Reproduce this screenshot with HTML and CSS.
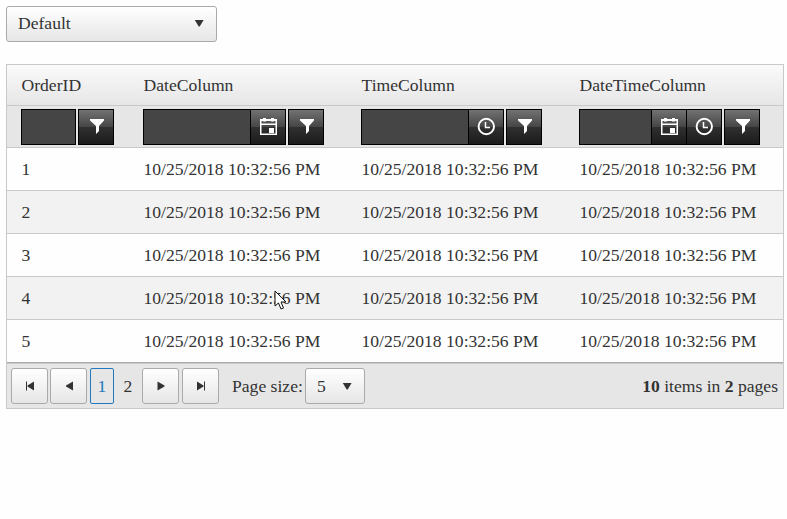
FILE: index.html
```html
<!DOCTYPE html>
<html lang="en">
<head>
<meta charset="utf-8">
<title>Orders</title>
<link rel="stylesheet" href="styles.css">
</head>
<body>
<svg class="defs" width="0" height="0">
  <symbol id="filter" viewBox="0 0 20 20"><path d="M3 3h14v1.500l-5 5.500v5l-3 3v-8l-6-5.500z" fill="#fff"/></symbol>
  <symbol id="calendar" viewBox="0 0 20 20"><path d="M2 3h17v16H2zM3.500 9v8.500h14V9zM3.500 5v2.500h14V5z" fill="#fff" fill-rule="evenodd"/><path d="M5 2h3v3.500H5zM13 2h3v3.500h-3zM11 12h5v5h-5z" fill="#fff"/></symbol>
  <symbol id="clock" viewBox="0 0 20 20"><circle cx="10.300" cy="10.500" r="7.700" fill="none" stroke="#fff" stroke-width="1.900"/><path d="M9.500 6v5.500H14" fill="none" stroke="#fff" stroke-width="1.500"/></symbol>
  <symbol id="down" viewBox="0 0 10 8"><path d="M.8 1h8.800L5.700 7.500h-1z" fill="#333"/></symbol>
</svg>
<div class="select skin"><span>Default</span><svg class="arrow"><use href="#down"/></svg></div>
<div class="grid">
  <div class="row header"><span>OrderID</span><span>DateColumn</span><span>TimeColumn</span><span>DateTimeColumn</span></div>
  <div class="row filters">
    <div class="filter"><i class="input id"></i><b class="button"><svg><use href="#filter"/></svg></b></div>
    <div class="filter"><i class="input"></i><b class="button joined"><svg><use href="#calendar"/></svg></b><b class="button"><svg><use href="#filter"/></svg></b></div>
    <div class="filter"><i class="input"></i><b class="button joined"><svg><use href="#clock"/></svg></b><b class="button"><svg><use href="#filter"/></svg></b></div>
    <div class="filter"><i class="input both"></i><b class="button joined"><svg><use href="#calendar"/></svg></b><b class="button joined"><svg><use href="#clock"/></svg></b><b class="button"><svg><use href="#filter"/></svg></b></div>
  </div>
  <div class="row"><span>1</span><span>10/25/2018 10:32:56 PM</span><span>10/25/2018 10:32:56 PM</span><span>10/25/2018 10:32:56 PM</span></div>
  <div class="row alt"><span>2</span><span>10/25/2018 10:32:56 PM</span><span>10/25/2018 10:32:56 PM</span><span>10/25/2018 10:32:56 PM</span></div>
  <div class="row"><span>3</span><span>10/25/2018 10:32:56 PM</span><span>10/25/2018 10:32:56 PM</span><span>10/25/2018 10:32:56 PM</span></div>
  <div class="row alt"><span>4</span><span>10/25/2018 10:32:56 PM</span><span>10/25/2018 10:32:56 PM</span><span>10/25/2018 10:32:56 PM</span></div>
  <div class="row last"><span>5</span><span>10/25/2018 10:32:56 PM</span><span>10/25/2018 10:32:56 PM</span><span>10/25/2018 10:32:56 PM</span></div>
  <div class="pager">
    <b class="nav skin"><svg viewBox="0 0 12 10"><path d="M2 .5h1v9H2zM10 .5v9L3.500 5.500v-1z"/></svg></b>
    <b class="nav skin"><svg viewBox="0 0 12 10"><path d="M10 .5v9L3 5.500v-1z"/></svg></b>
    <span class="page current">1</span>
    <span class="page second">2</span>
    <b class="nav skin next"><svg viewBox="0 0 12 10"><path d="M2.500 .5v9l7-4v-1z"/></svg></b>
    <b class="nav skin final"><svg viewBox="0 0 12 10"><path d="M2 .5v9l6.500-4v-1zM9 .5h1v9H9z"/></svg></b>
    <span class="label">Page size:</span>
    <div class="size skin"><span>5</span><svg class="arrow"><use href="#down"/></svg></div>
    <span class="info"><strong>10</strong> items in <strong>2</strong> pages</span>
  </div>
</div>
<svg class="cursor" viewBox="0 0 13 20"><path d="M1 1v15l3.500-3 2.500 6 2.500-1-2.500-6h5z" fill="#fff" stroke="#111"/></svg>
</body>
</html>
```
FILE: styles.css
```css
* { box-sizing: border-box; }
body {
  margin: 0;
  padding: 6px;
  background: #fefefe;
  color: #333;
  font: 17.6px/24px "Liberation Serif", "Times New Roman", serif;
}
.defs { position: absolute; }
.skin {
  border: 1px solid #aaa;
  border-radius: 3px;
  background: linear-gradient(#fff, #e6e6e6);
}
.select {
  display: flex;
  align-items: center;
  justify-content: space-between;
  width: 211px;
  height: 36px;
  padding: 0 12px 2px 11px;
}
.arrow { width: 10px; height: 8px; }
.grid {
  width: 778px;
  height: 345px;
  margin-top: 22px;
  border: 1px solid #c9c9c9;
  background: #fefefe;
}
.row {
  display: grid;
  grid-template-columns: 122px 218px 218px 1fr;
  align-items: center;
  height: 43px;
  padding-left: 14px;
  border-bottom: 1px solid #c9c9c9;
}
.row span { padding-left: 0.5px; }
.header {
  height: 41px;
  background: linear-gradient(#fafafa, #e6e6e6);
}
.filters { height: 42px; background: #e6e6e6; }
.alt { background: #f2f2f2; }
.last { border-bottom-color: #aaa; }
.filter { display: flex; }
.input {
  width: 108px;
  height: 36px;
  border: 1px solid #000;
  background: #454545;
}
.id { width: 55px; }
.both { width: 73px; }
.button {
  display: flex;
  align-items: center;
  justify-content: center;
  width: 36px;
  height: 36px;
  margin-left: 2px;
  border: 1px solid #000;
  background: linear-gradient(#727272, #454545 50%, #303030 50%, #1b1b1b);
}
.joined { margin-left: -1px; }
.button svg { width: 20px; height: 20px; margin: -2px 0 0 1px; }
.joined svg { margin-left: 0; }
.pager {
  display: flex;
  align-items: center;
  height: 45px;
  padding: 0 5px 0 4px;
  border-top: 1px solid #c9c9c9;
  background: #e6e6e6;
}
.nav {
  display: flex;
  align-items: center;
  justify-content: center;
  width: 37px;
  height: 36px;
  margin-right: 2px;
}
.nav svg { width: 12px; height: 10px; fill: #333; }
.page {
  width: 24px;
  height: 36px;
  margin: 0 2px 0 1px;
  border: 1px solid transparent;
  border-radius: 2px;
  line-height: 35px;
  text-align: center;
}
.second { margin-left: 0; }
.current {
  border-color: #2478bd;
  color: #2478bd;
}
.next { margin-right: 3px; }
.final { margin-right: 0; }
.label { width: 73px; margin-left: 13px; white-space: nowrap; }
.size {
  display: flex;
  align-items: center;
  justify-content: space-between;
  width: 60px;
  height: 36px;
  padding: 0 12px 0 11px;
}
.info { margin-left: auto; white-space: nowrap; }
.cursor { position: absolute; left: 274px; top: 290px; width: 13px; height: 20px; }
```
